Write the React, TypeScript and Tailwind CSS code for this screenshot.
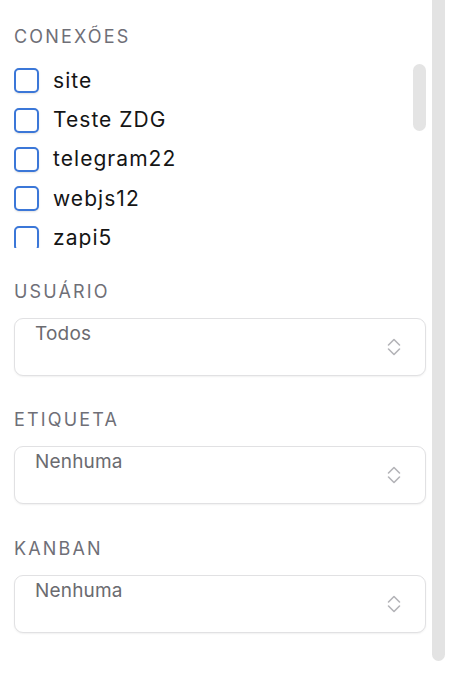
import React from "react";

const items = ["site", "Teste ZDG", "telegram22", "webjs12", "zapi5"];

function Label({ children }: { children: React.ReactNode }) {
  return (
    <div className="text-[18px] leading-[21px] tracking-[0.12em] text-[#6f6f77] uppercase">
      {children}
    </div>
  );
}

function Chevrons() {
  return (
    <svg width="14" height="19" viewBox="0 0 14 19" fill="none" stroke="#b4b4b8" strokeWidth="1.6" strokeLinecap="round" strokeLinejoin="round">
      <path d="M1.5 7.5 L7 2 L12.5 7.5" />
      <path d="M1.5 11.5 L7 17 L12.5 11.5" />
    </svg>
  );
}

function Select({ value }: { value: string }) {
  return (
    <div className="relative h-[58px] rounded-[9px] border-[1.5px] border-[#e1e1e3] bg-white shadow-[0_1px_2px_rgba(0,0,0,0.06)] pl-[20px] pt-[3px]">
      <div className="text-[19px] leading-[23px] tracking-[0.01em] text-[#6b6b70]">{value}</div>
      <div className="absolute right-[24px] top-1/2 -translate-y-1/2 flex">
        <Chevrons />
      </div>
    </div>
  );
}

export default function App() {
  return (
    <div className="w-[458px] h-[674px] bg-white flex overflow-hidden" style={{ fontFamily: "Inter, 'Noto Sans', sans-serif" }}>
      <div className="w-[432px] pl-[14px] pr-[6px] pt-[26px] flex flex-col">
        <Label>Conexões</Label>
        <div className="relative mt-[14px] h-[187px] overflow-hidden">
          <div className="flex flex-col">
            {items.map((it) => (
              <div key={it} className="h-[39.4px] flex items-center gap-[14px] shrink-0">
                <div className="w-[25px] h-[25px] rounded-[5px] border-2 border-[#3b77d8] bg-white shadow-[0_1px_2px_rgba(0,0,0,0.12)] shrink-0" />
                <span className="text-[21px] leading-[24px] tracking-[0.05em] text-[#151515]">{it}</span>
              </div>
            ))}
          </div>
          <div className="absolute right-0 top-[3px] w-[13px] h-[67px] rounded-full bg-[#e4e4e4]" />
        </div>
        <div className="mt-[32.5px]">
          <Label>Usuário</Label>
        </div>
        <div className="mt-[16px]">
          <Select value="Todos" />
        </div>
        <div className="mt-[33.5px]">
          <Label>Etiqueta</Label>
        </div>
        <div className="mt-[16px]">
          <Select value="Nenhuma" />
        </div>
        <div className="mt-[33.5px]">
          <Label>Kanban</Label>
        </div>
        <div className="mt-[16px]">
          <Select value="Nenhuma" />
        </div>
      </div>
      <div className="w-[13px] h-[661px] bg-[#e3e3e3] rounded-b-full shrink-0" />
    </div>
  );
}
